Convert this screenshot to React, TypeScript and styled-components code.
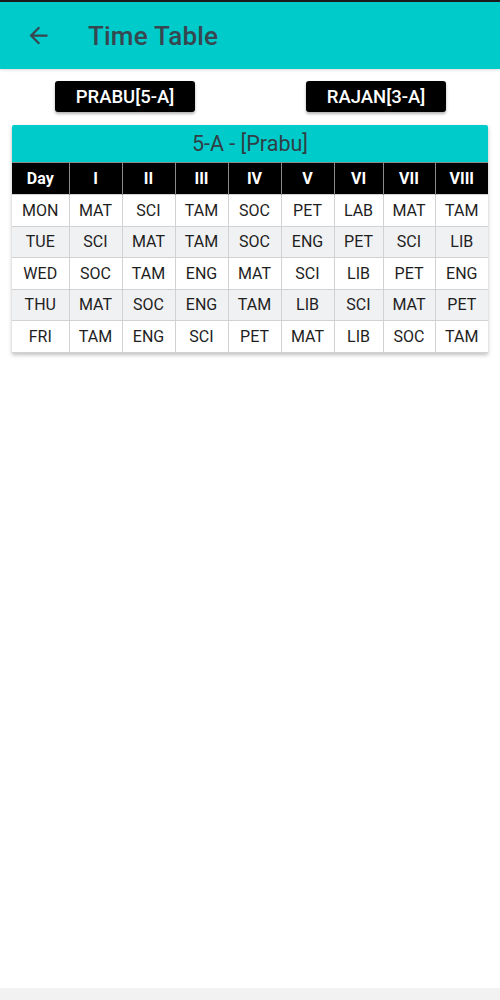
import React from 'react'
import styled, { createGlobalStyle } from 'styled-components'

const GlobalStyle = createGlobalStyle`
  html, body {
    margin: 0;
    padding: 0;
    background: #ffffff;
    font-family: Roboto, "Liberation Sans", sans-serif;
  }
`

const periods = ['I', 'II', 'III', 'IV', 'V', 'VI', 'VII', 'VIII']
const colWidths = [57, 53, 53, 53, 53, 53, 49, 52, 53]

const rows: string[][] = [
  ['MON', 'MAT', 'SCI', 'TAM', 'SOC', 'PET', 'LAB', 'MAT', 'TAM'],
  ['TUE', 'SCI', 'MAT', 'TAM', 'SOC', 'ENG', 'PET', 'SCI', 'LIB'],
  ['WED', 'SOC', 'TAM', 'ENG', 'MAT', 'SCI', 'LIB', 'PET', 'ENG'],
  ['THU', 'MAT', 'SOC', 'ENG', 'TAM', 'LIB', 'SCI', 'MAT', 'PET'],
  ['FRI', 'TAM', 'ENG', 'SCI', 'PET', 'MAT', 'LIB', 'SOC', 'TAM'],
]

export default function App() {
  return (
    <Page>
      <GlobalStyle />
      <AppBar>
        <BackButton aria-label="back">
          <svg width="27" height="27" viewBox="0 0 24 24">
            <path d="M20 11H7.83l5.59-5.59L12 4l-8 8 8 8 1.41-1.41L7.83 13H20v-2z" fill="#37474f" />
          </svg>
        </BackButton>
        <Title>Time Table</Title>
      </AppBar>

      <TeacherBar>
        <TeacherButton>PRABU[5-A]</TeacherButton>
        <TeacherButton>RAJAN[3-A]</TeacherButton>
      </TeacherBar>

      <Card>
        <CardTitle>5-A - [Prabu]</CardTitle>
        <Table>
          <colgroup>
            {colWidths.map((w, i) => (
              <col key={i} style={{ width: w }} />
            ))}
          </colgroup>
          <thead>
            <tr>
              <HeadCell>Day</HeadCell>
              {periods.map(p => (
                <HeadCell key={p}>{p}</HeadCell>
              ))}
            </tr>
          </thead>
          <tbody>
            {rows.map((row, r) => (
              <BodyRow key={row[0]} $striped={r % 2 === 1}>
                {row.map((cell, c) => (
                  <BodyCell key={c}>{cell}</BodyCell>
                ))}
              </BodyRow>
            ))}
          </tbody>
        </Table>
      </Card>

      <Spacer />
      <NavStrip />
    </Page>
  )
}

const Page = styled.div`
  min-height: 1000px;
  display: flex;
  flex-direction: column;
  background: #ffffff;
`

const AppBar = styled.header`
  height: 67px;
  border-top: 2px solid #1a1a1a;
  background: #00cbcb;
  display: flex;
  align-items: center;
  box-shadow: 0 1px 3px rgba(0, 0, 0, 0.15);
`

const BackButton = styled.div`
  width: 27px;
  height: 27px;
  margin-left: 25px;
  display: flex;
  align-items: center;
  justify-content: center;
`

const Title = styled.h1`
  margin: 0 0 0 36px;
  font-size: 26px;
  font-weight: 500;
  color: #37474f;
  letter-spacing: 0.2px;
`

const TeacherBar = styled.div`
  display: flex;
  justify-content: space-between;
  padding: 12px 54px 0 55px;
`

const TeacherButton = styled.button`
  width: 140px;
  height: 31px;
  border: none;
  border-radius: 3px;
  background: #000000;
  color: #ffffff;
  font-family: Roboto, "Liberation Sans", sans-serif;
  font-size: 18.5px;
  font-weight: 500;
  box-shadow: 0 2px 3px rgba(0, 0, 0, 0.3);
  padding: 0;
`

const Card = styled.div`
  margin: 13px 12px 0 12px;
  box-shadow: 0 2px 4px rgba(0, 0, 0, 0.25);
  background: #ffffff;
`

const CardTitle = styled.div`
  height: 37px;
  background: #00cbcb;
  color: #2f3f45;
  font-size: 21.5px;
  display: flex;
  align-items: center;
  justify-content: center;
  border-radius: 2px 2px 0 0;
`

const Table = styled.table`
  width: 100%;
  table-layout: fixed;
  border-collapse: collapse;
`

const HeadCell = styled.th`
  height: 31px;
  padding: 0;
  background: #000000;
  color: #ffffff;
  font-size: 16px;
  font-weight: 700;
  text-align: center;
  border-left: 1px solid #8a8a8a;
  border-top: 1px solid #8a8a8a;

  &:first-child {
    border-left: none;
  }
`

const BodyRow = styled.tr<{ $striped: boolean }>`
  background: ${props => (props.$striped ? '#f0f1f3' : '#ffffff')};
`

const BodyCell = styled.td`
  height: 30.5px;
  padding: 0;
  text-align: center;
  font-size: 16px;
  color: #1e1e1e;
  border: 1px solid #d2d2d2;

  &:first-child {
    border-left: none;
  }

  &:last-child {
    border-right: none;
  }
`

const Spacer = styled.div`
  flex: 1;
`

const NavStrip = styled.div`
  height: 12px;
  background: #f2f2f3;
`
